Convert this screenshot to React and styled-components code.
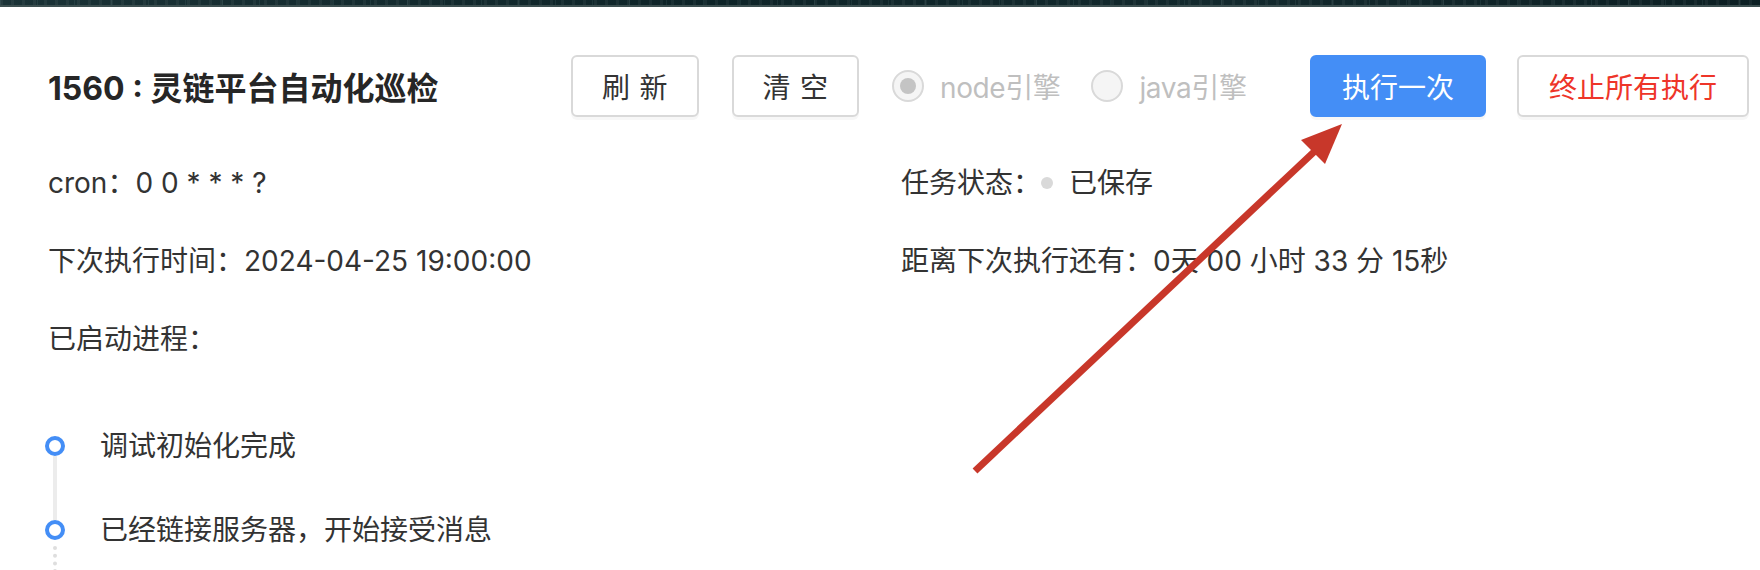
import React from "react";
import styled, { createGlobalStyle } from "styled-components";

const colors = {
  text: "#333333",
  title: "#262626",
  border: "#d9d9d9",
  disabled: "#bfbfbf",
  primary: "#448ef6",
  danger: "#ee3529",
  arrow: "#c8372a",
};

const GlobalStyle = createGlobalStyle`
  html, body {
    margin: 0;
    padding: 0;
    background: #ffffff;
    overflow: hidden;
  }
  body {
    font-family: Inter, "Noto Sans CJK SC", sans-serif;
    color: ${colors.text};
  }
`;

const Screen = styled.div`
  position: relative;
  width: 1760px;
  height: 570px;
  overflow: hidden;
`;

const TopBand = styled.div`
  height: 5px;
  border-bottom: 2px solid #3c4f50;
  background:
    repeating-linear-gradient(90deg, rgba(255,255,255,0.05) 0 3px, transparent 3px 11px),
    repeating-linear-gradient(90deg, rgba(120,160,160,0.12) 0 1px, transparent 1px 37px),
    linear-gradient(90deg, #1a3236, #0e2428 40%, #13292d 70%, #0c1f23);
`;

const Page = styled.div`
  padding: 0 11px 0 48px;
`;

const Header = styled.div`
  display: flex;
  align-items: center;
  height: 62px;
  margin-top: 48px;
`;

const Title = styled.h1`
  flex: 0 0 523px;
  margin: 0;
  font-size: 32px;
  font-weight: 700;
  color: ${colors.title};
  white-space: nowrap;
`;

const Button = styled.button`
  flex: none;
  height: 62px;
  margin-left: ${(p) => (p.$auto ? "auto" : `${p.$gap || 0}px`)};
  padding: 0 ${(p) => p.$pad || 30}px;
  border: 2px solid ${(p) => (p.$primary ? p.$bg : colors.border)};
  border-radius: 6px;
  background: ${(p) => (p.$primary ? p.$bg : "#fff")};
  color: ${(p) => p.$color || colors.text};
  font-family: "Noto Sans CJK SC", sans-serif;
  font-size: 28px;
  box-shadow: 0 3px 0 rgba(0, 0, 0, 0.03);
  white-space: nowrap;
  cursor: pointer;
`;

const Spaced = styled.span`
  letter-spacing: 0.34em;
  margin-right: -0.34em;
`;

const RadioGroup = styled.div`
  display: flex;
  align-items: center;
  margin-left: 33px;
`;

const Radio = styled.label`
  display: inline-flex;
  align-items: center;
  margin-right: ${(p) => p.$gap || 0}px;
  color: ${colors.disabled};
  font-size: 28px;
  letter-spacing: -0.4px;
  white-space: nowrap;
`;

const RadioCircle = styled.span`
  box-sizing: border-box;
  width: 32px;
  height: 32px;
  margin-right: 16px;
  border: 2px solid ${colors.border};
  border-radius: 50%;
  background: #f5f5f5;
  display: inline-flex;
  align-items: center;
  justify-content: center;

  &::after {
    content: "";
    width: 16px;
    height: 16px;
    border-radius: 50%;
    background: ${(p) => (p.$checked ? "#c4c4c4" : "transparent")};
  }
`;

const InfoGrid = styled.div`
  display: grid;
  grid-template-columns: 853px 1fr;
  row-gap: 34px;
  margin-top: 44px;
  font-size: 28px;
  line-height: 44px;
  white-space: nowrap;
`;

const Cell = styled.div`
  grid-column: ${(p) => p.$col || "auto"};
`;

const StatusDot = styled.span`
  display: inline-block;
  width: 12px;
  height: 12px;
  margin-right: 16px;
  border-radius: 50%;
  background: ${colors.border};
  vertical-align: middle;
  position: relative;
  top: -2px;
`;

const Timeline = styled.ul`
  list-style: none;
  margin: 63px 0 0 -3px;
  padding: 0;
`;

const Item = styled.li`
  display: flex;
  height: 84px;
`;

const DotCol = styled.div`
  display: flex;
  flex-direction: column;
  align-items: center;
  width: 20px;
  padding-top: 12px;
  box-sizing: border-box;
`;

const Dot = styled.span`
  flex: none;
  box-sizing: border-box;
  width: 20px;
  height: 20px;
  border: 4px solid ${colors.primary};
  border-radius: 50%;
  background: #fff;
`;

const Tail = styled.span`
  flex: 1;
  margin-bottom: -12px;
  width: 0;
  border-left: 4px ${(p) => (p.$pending ? "dotted #dedede" : "solid #ececec")};
  margin-top: ${(p) => (p.$pending ? 6 : 0)}px;
`;

const ItemText = styled.div`
  margin-left: 35px;
  font-size: 28px;
  line-height: 44px;
  white-space: nowrap;
`;

const ArrowLayer = styled.svg`
  position: absolute;
  inset: 0;
  pointer-events: none;
`;

const Arrow = () => (
  <ArrowLayer width="1760" height="570" viewBox="0 0 1760 570">
    <line x1="975" y1="471" x2="1316" y2="150" stroke={colors.arrow} strokeWidth="7" />
    <polygon points="1342,124 1301,140 1325,164" fill={colors.arrow} />
  </ArrowLayer>
);

const logs = [
  { text: "调试初始化完成" },
  { text: "已经链接服务器，开始接受消息", pending: true },
];

export default function App() {
  return (
    <Screen>
      <GlobalStyle />
      <TopBand />
      <Page>
        <Header>
          <Title>1560 : 灵链平台自动化巡检</Title>
          <Button $pad={29}>
            <Spaced>刷新</Spaced>
          </Button>
          <Button $gap={33} $pad={29}>
            <Spaced>清空</Spaced>
          </Button>
          <RadioGroup>
            <Radio $gap={31}>
              <RadioCircle $checked />
              node引擎
            </Radio>
            <Radio>
              <RadioCircle />
              java引擎
            </Radio>
          </RadioGroup>
          <Button $auto $primary $bg={colors.primary} $color="#fff">
            执行一次
          </Button>
          <Button $gap={31} $color={colors.danger}>
            终止所有执行
          </Button>
        </Header>

        <InfoGrid>
          <Cell>cron：0 0 * * * ?</Cell>
          <Cell>
            任务状态：<StatusDot />已保存
          </Cell>
          <Cell>下次执行时间：2024-04-25 19:00:00</Cell>
          <Cell>距离下次执行还有：0天 00 小时 33 分 15秒</Cell>
          <Cell $col="1 / 3">已启动进程：</Cell>
        </InfoGrid>

        <Timeline>
          {logs.map((log) => (
            <Item key={log.text}>
              <DotCol>
                <Dot />
                <Tail $pending={log.pending} />
              </DotCol>
              <ItemText>{log.text}</ItemText>
            </Item>
          ))}
        </Timeline>
      </Page>
      <Arrow />
    </Screen>
  );
}
